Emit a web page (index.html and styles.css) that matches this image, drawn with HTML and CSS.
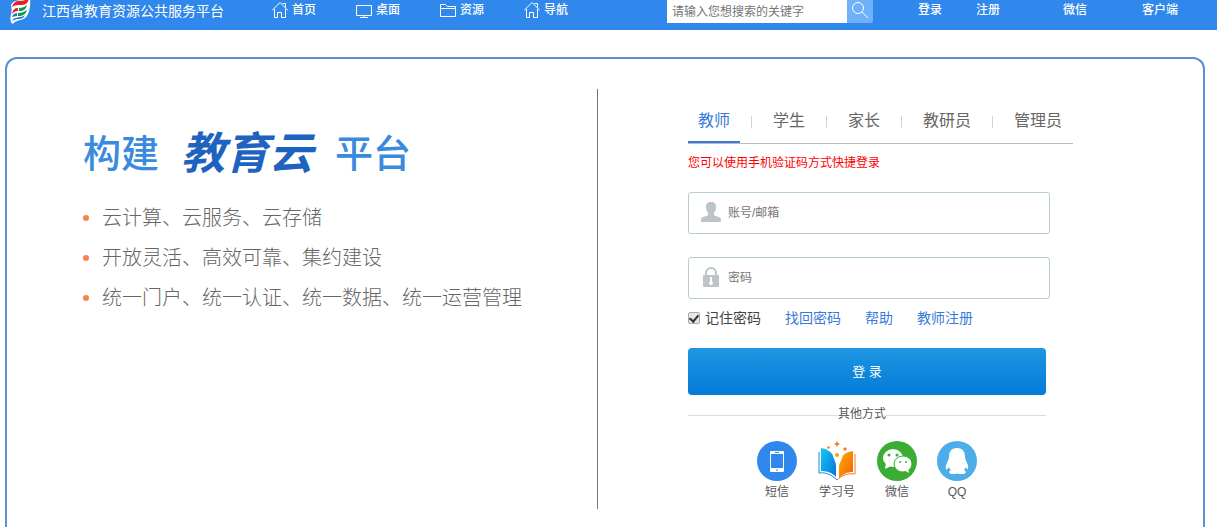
FILE: index.html
```html
<!DOCTYPE html>
<html lang="zh-CN">
<head>
<meta charset="utf-8">
<title>江西省教育资源公共服务平台</title>
<link rel="stylesheet" href="styles.css">
</head>
<body>
<header class="topbar">
  <a class="brand" href="#">
    <svg class="brand-logo" width="24" height="24" viewBox="0 0 24 24">
      <path d="M3 5C6-2 15 2 22-2C23 6 21 15 17 18C13 21 8 20 6 23Q4 25 3 22C1 16 5 14 3 5Z" fill="#fff"/>
      <path d="M4 7C6 1 9 1 12 1C15 1 18 0 21-2C20 4 17 5 13 5C9 5 7 5 4 7Z" fill="#e3232c"/>
      <path d="M4 14C5 9 7 8 10 8V11C7 11 6 12 4 14Z" fill="#e3232c"/>
      <path d="M11 8C14 8 17 7 19 5C18 9 16 11 11 11Z" fill="#0b9a50"/>
      <path d="M4 17C5 14 7 13 9 13V16C7 16 5 17 4 17Z" fill="#1976c9"/>
      <path d="M10 13C14 13 16 12 19 10C18 14 15 16 10 16Z" fill="#0b9a50"/>
      <path d="M4 21C6 17 9 18 12 17C14 17 16 16 17 15C16 18 13 19 10 19C7 19 6 20 4 21Z" fill="#1976c9"/>
    </svg>
    <span>江西省教育资源公共服务平台</span>
  </a>
  <nav class="main-nav">
    <a href="#"><svg class="nav-icon" viewBox="0 0 16 17"><path d="M0 9.500 8 1.500l8 8M2.500 8v8.500h3v-5h4v5h4V8M10.500 2.500h3v4"/></svg>首页</a>
    <a href="#"><svg class="nav-icon" viewBox="0 0 16 17"><path d="M.5 4.500h15v10H.5zM8 14.500v2M4 16.500h8"/></svg>桌面</a>
    <a href="#"><svg class="nav-icon" viewBox="0 0 16 17"><path d="M.5 15.500v-12h5l2 2h8v10zM.5 7.500h15"/></svg>资源</a>
    <a href="#"><svg class="nav-icon" viewBox="0 0 16 17"><path d="M0 9.500 8 1.500l8 8M2.500 8v8.500h3v-5h4v5h4V8M10.500 2.500h3v4"/></svg>导航</a>
  </nav>
  <form class="search">
    <input type="text" placeholder="请输入您想搜索的关键字" aria-label="搜索">
    <button type="button" aria-label="搜索"><svg width="18" height="18" viewBox="0 0 18 18"><circle cx="7" cy="7" r="5.500"/><path d="m11 11 6 6"/></svg></button>
  </form>
  <nav class="user-nav">
    <a href="#">登录</a>
    <a href="#">注册</a>
    <a class="wechat" href="#">微信</a>
    <a class="client" href="#">客户端</a>
  </nav>
</header>
<main class="panel">
  <section class="intro">
    <h1 class="slogan"><span>构建</span><em>教育云</em><span>平台</span></h1>
    <ul class="features">
      <li>云计算、云服务、云存储</li>
      <li>开放灵活、高效可靠、集约建设</li>
      <li>统一门户、统一认证、统一数据、统一运营管理</li>
    </ul>
  </section>
  <section class="login">
    <div class="tabs" role="tablist">
      <button type="button" role="tab" class="tab active" aria-selected="true">教师</button>
      <button type="button" role="tab" class="tab">学生</button>
      <button type="button" role="tab" class="tab">家长</button>
      <button type="button" role="tab" class="tab">教研员</button>
      <button type="button" role="tab" class="tab">管理员</button>
    </div>
    <p class="hint">您可以使用手机验证码方式快捷登录</p>
    <form>
      <label class="field">
        <svg width="20" height="22" viewBox="0 0 20 22"><path d="M5 6C5 2 7 1 10 1s5 1 5 5c0 3-1 4-2 6v2c2 2 7 1 7 5v2H0v-2c0-4 5-3 7-5v-2C6 10 5 9 5 6Z" fill="#bdc3c7"/></svg>
        <input type="text" placeholder="账号/邮箱" aria-label="账号/邮箱">
      </label>
      <label class="field">
        <svg width="20" height="22" viewBox="0 0 20 22"><path d="M5 11V7a5 5 0 0 1 10 0v4" fill="none" stroke="#bdc3c7" stroke-width="2"/><rect x="2" y="9" width="16" height="12" rx="1" fill="#bdc3c7"/><path d="M10 11v5" stroke="#fff" stroke-width="2"/><circle cx="10" cy="17" r="2" fill="#fff"/></svg>
        <input type="password" placeholder="密码" aria-label="密码">
      </label>
      <div class="options">
        <label class="remember"><input type="checkbox" checked>记住密码</label>
        <a href="#">找回密码</a>
        <a href="#">帮助</a>
        <a href="#">教师注册</a>
      </div>
      <button type="button" class="submit">登 录</button>
    </form>
    <div class="divider"><span>其他方式</span></div>
    <div class="methods">
      <a href="#">
        <svg viewBox="0 0 40 40"><circle cx="20" cy="20" r="20" fill="#3088ec"/><rect x="13" y="10" width="14" height="21" rx="1" fill="#fff"/><path d="M14 13h12v14H14z" fill="#3088ec"/><path d="M18 11.500h4M19 29h2" stroke="#3088ec"/></svg>
        短信
      </a>
      <a href="#">
        <svg viewBox="0 0 40 40">
          <defs>
            <linearGradient id="bookBlue" x1="0" y1="0" x2="1" y2="1"><stop offset="0" stop-color="#13c8f4"/><stop offset="1" stop-color="#0872df"/></linearGradient>
            <linearGradient id="bookOrange" x1="0" y1="0" x2="1" y2="1"><stop offset="0" stop-color="#ffb000"/><stop offset="1" stop-color="#f35f09"/></linearGradient>
          </defs>
          <path d="M4 7C10 8 15 11 16 15C17 19 19 21 19 25V36C16 32 10 30 4 30Z" fill="url(#bookBlue)"/>
          <path d="M36 10C30 11 26 13 25 17C24 21 22 22 22 26V37C26 33 30 31 36 31Z" fill="url(#bookOrange)"/>
          <path d="M2 11v21c7-1 13 2 18 7" fill="none" stroke="#118de7"/>
          <path d="M38 13v20c-7-1-13 1-18 6" fill="none" stroke="#f47b18"/>
          <circle cx="20" cy="14" r="2" fill="#ff9d00"/>
          <path d="m20 0 1 2 2 1-2 1-1 2-1-2-2-1 2-1zM11 5l2 1-1 2-2-1zM28 6l2 2-2 2-2-2z" fill="#f57b21"/>
        </svg>
        学习号
      </a>
      <a href="#">
        <svg viewBox="0 0 40 40"><circle cx="20" cy="20" r="20" fill="#3cad34"/><ellipse cx="16" cy="17" rx="10" ry="9" fill="#fff"/><path d="m9 22-1 6 6-3z" fill="#fff"/><g fill="#3cad34"><circle cx="12" cy="14" r="1.500"/><circle cx="20" cy="14" r="1.500"/></g><ellipse cx="26" cy="23" rx="9" ry="8" fill="#fff" stroke="#3cad34"/><path d="m27 29 5 3-1-5z" fill="#fff"/><g fill="#3cad34"><circle cx="23" cy="21" r="1"/><circle cx="29" cy="21" r="1"/></g></svg>
        微信
      </a>
      <a href="#">
        <svg viewBox="0 0 40 40"><circle cx="20" cy="20" r="20" fill="#4dade9"/><path d="M20 7C14 7 12 11 12 16C12 20 8 23 9 28C9 29 11 28 12 26Q12 28 14 29C12 30 11 32 14 33H19L20 32L21 33H27C30 32 29 30 27 29Q28 28 29 26C30 28 31 29 31 28C32 23 28 20 28 16C28 11 26 7 20 7Z" fill="#fff"/></svg>
        QQ
      </a>
    </div>
  </section>
</main>
</body>
</html>
```
FILE: styles.css
```css
* { box-sizing: border-box; }

body {
  margin: 0;
  min-height: 100vh;
  display: flex;
  flex-direction: column;
  background: #fff;
  color: #555;
  font: 12px/20px "Liberation Sans", "Noto Sans CJK SC", sans-serif;
}

a { color: inherit; text-decoration: none; }
button, input { font: inherit; }

.topbar {
  display: flex;
  align-items: flex-start;
  height: 30px;
  background: #3088ec;
  color: #fff;
}

.brand {
  display: flex;
  gap: 10px;
  width: 272px;
  padding-left: 8px;
  font-size: 14px;
  line-height: 22px;
}

.main-nav { display: flex; gap: 40px; flex: 1; }
.main-nav a { display: flex; gap: 4px; font-weight: 500; white-space: nowrap; }

.nav-icon {
  width: 16px;
  height: 17px;
  margin-top: 1px;
  fill: none;
  stroke: #fff;
}

.search { display: flex; height: 23px; }

.search input {
  width: 180px;
  padding: 0 5px;
  border: 0;
  border-radius: 0;
}

.search button {
  width: 26px;
  padding: 0 0 3px;
  border: 0;
  border-radius: 0 0 2px 0;
  background: #6eb0fa;
}

.search svg { display: block; margin: 0 auto; fill: none; stroke: #fff; }
.search input::placeholder, .field input::placeholder { color: #757575; opacity: 1; }

.user-nav { display: flex; width: 344px; padding-left: 45px; font-weight: 500; }
.user-nav a { margin-right: 34px; }
.user-nav .wechat { margin-left: 29px; margin-right: 55px; }
.user-nav .client { margin-right: 0; }

.panel {
  flex: 1;
  display: flex;
  margin: 27px 12px 0 5px;
  padding: 30px 0 18px;
  border: 2px solid #5b8fd3;
  border-bottom: 0;
  border-radius: 12px 12px 0 0;
}

.intro {
  width: 591px;
  padding: 35px 0 0 76px;
  border-right: 1px solid #777;
}

.slogan {
  display: flex;
  align-items: center;
  gap: 22px;
  margin: 0;
  color: #3a8add;
  font-size: 38px;
  font-weight: 500;
  line-height: 60px;
}

.slogan em { color: #1f63c0; font-size: 44px; font-weight: 700; }

.features {
  margin: 14px 0 0;
  padding: 0;
  list-style: none;
  color: #666;
  font-size: 20px;
  font-weight: 300;
  line-height: 40px;
}

.features li { display: flex; align-items: center; gap: 13px; }

.features li::before {
  content: "";
  width: 6px;
  height: 6px;
  border-radius: 50%;
  background: #ff7f50;
}

.login { flex: 1; padding-left: 90px; }

.tabs {
  display: flex;
  gap: 23px;
  width: 385px;
  height: 55px;
  border-bottom: 1px solid #bbb;
}

.tab {
  position: relative;
  height: 54px;
  padding: 12px 10px 0;
  border: 0;
  border-bottom: 2px solid transparent;
  background: none;
  color: #666;
  font-size: 16px;
}

.tab.active { border-color: #3879d9; color: #3879d9; }

.tab + .tab::before {
  content: "";
  position: absolute;
  left: -12px;
  top: 27px;
  width: 1px;
  height: 12px;
  background: #ccd8cc;
}

.hint { margin: 9px 0 19px; color: #f00; }

.field {
  display: flex;
  align-items: center;
  gap: 7px;
  width: 362px;
  height: 42px;
  margin-bottom: 23px;
  padding-left: 12px;
  border: 1px solid #b7cdd5;
  border-radius: 3px;
}

.field svg { margin-bottom: 2px; }
.field input { flex: 1; height: 36px; padding: 0; border: 0; outline: 0; background: none; }

.options {
  display: flex;
  gap: 24px;
  margin-top: -14px;
  font-size: 14px;
  line-height: 20px;
}

.options a { color: #3879d9; }
.remember { display: flex; align-items: center; gap: 5px; color: #444; }

.remember input {
  appearance: none;
  width: 12px;
  height: 12px;
  margin: 0;
  border: 1px solid #aaa;
  border-radius: 2px;
  background: #e6e6e6;
}

.remember input:checked::before {
  content: "";
  display: block;
  width: 4px;
  height: 7px;
  margin: 0 auto;
  border: solid #333;
  border-width: 0 2px 2px 0;
  transform: rotate(40deg);
}

.submit {
  display: block;
  width: 358px;
  height: 47px;
  margin-top: 20px;
  border: 0;
  border-radius: 4px;
  background: linear-gradient(#1e96e2, #047bd8);
  color: #fff;
  font-size: 13px;
  font-weight: 400;
}

.divider {
  display: flex;
  align-items: center;
  width: 358px;
  margin-top: 9px;
}

.divider::before, .divider::after { content: ""; flex: 1; height: 1px; margin-top: 2px; background: #ddd; }
.divider::before { flex: 0 0 150px; }

.methods {
  display: flex;
  justify-content: center;
  gap: 20px;
  width: 358px;
  margin-top: 17px;
}

.methods a { width: 40px; text-align: center; white-space: nowrap; }
.methods svg { display: block; width: 40px; height: 40px; margin-bottom: 1px; }
```
